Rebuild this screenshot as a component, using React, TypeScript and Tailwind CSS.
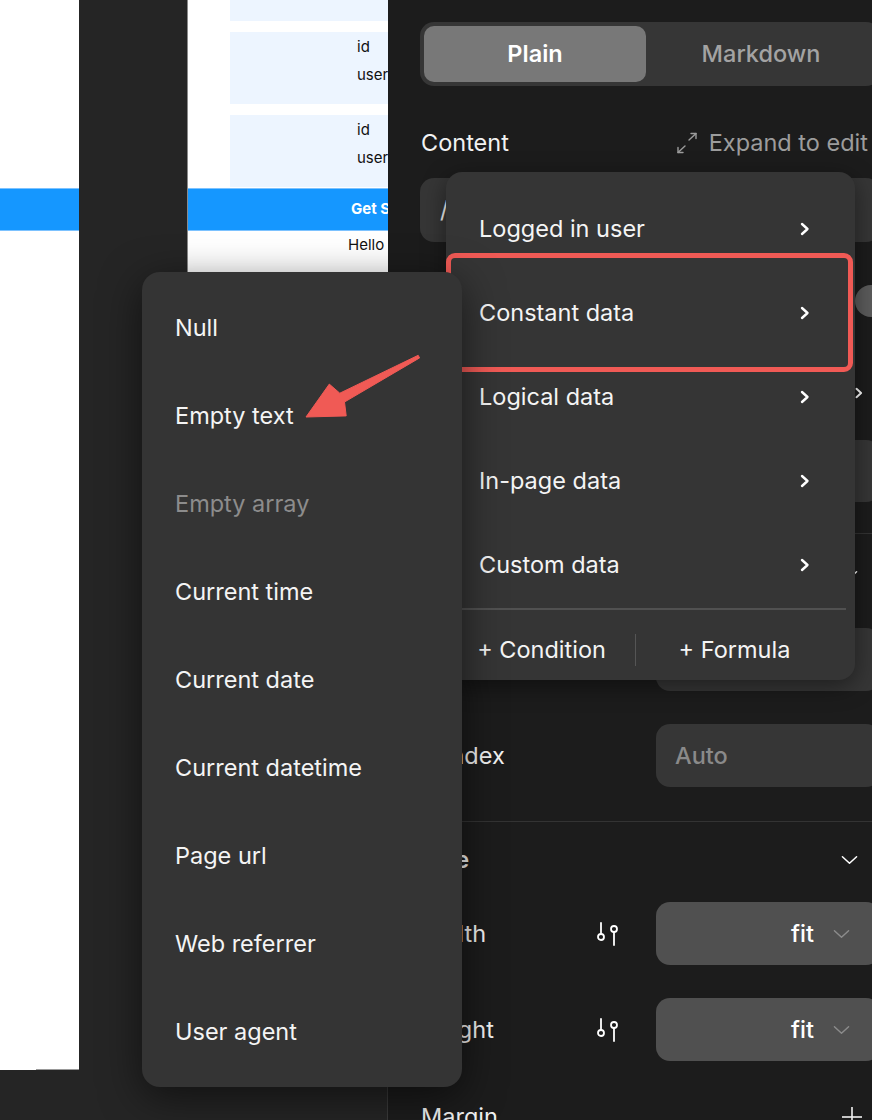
import React from 'react';

const mainItems = ['Logged in user', 'Constant data', 'Logical data', 'In-page data', 'Custom data'];

const constantItems = [
  { label: 'Null' },
  { label: 'Empty text' },
  { label: 'Empty array', muted: true },
  { label: 'Current time' },
  { label: 'Current date' },
  { label: 'Current datetime' },
  { label: 'Page url' },
  { label: 'Web referrer' },
  { label: 'User agent' },
];

function ChevronRight({ className = '' }: { className?: string }) {
  return (
    <svg viewBox="0 0 12 16" className={className} fill="none" stroke="currentColor" strokeWidth="2.4" strokeLinecap="round" strokeLinejoin="round">
      <polyline points="3,3 8.5,8 3,13" />
    </svg>
  );
}

function ChevronDown({ className = '', width = 1.6 }: { className?: string; width?: number }) {
  return (
    <svg viewBox="0 0 18 10" className={className} fill="none" stroke="currentColor" strokeWidth={width} strokeLinecap="round" strokeLinejoin="round">
      <polyline points="1.5,1.5 9,8.5 16.5,1.5" />
    </svg>
  );
}

function ExpandIcon() {
  return (
    <svg viewBox="0 0 24 22" className="h-[22px] w-[24px]" fill="none" stroke="currentColor" strokeWidth="1.4" strokeLinecap="round" strokeLinejoin="round">
      <line x1="14" y1="8" x2="21" y2="1.5" />
      <polyline points="16,1.5 21,1.5 21,6.5" />
      <line x1="10" y1="14" x2="3" y2="20.5" />
      <polyline points="3,15.5 3,20.5 8,20.5" />
    </svg>
  );
}

function SlidersIcon() {
  return (
    <svg viewBox="0 0 24 24" className="h-[24px] w-[24px]" fill="none" stroke="currentColor" strokeWidth="1.8" strokeLinecap="round">
      <line x1="5" y1="1" x2="5" y2="12" />
      <circle cx="5" cy="15" r="3" />
      <circle cx="18" cy="7" r="3" />
      <line x1="18" y1="10" x2="18" y2="23" />
    </svg>
  );
}

function FitSelect() {
  return (
    <div className="ml-auto flex h-[63px] w-[224px] items-center justify-end rounded-[14px] bg-[#505050] pr-[30px]">
      <span className="font-medium text-white">fit</span>
      <ChevronDown className="ml-[19px] h-[10px] w-[17px] text-[#8c8c8c]" width={1.5} />
    </div>
  );
}

export default function App() {
  return (
    <div className="relative flex h-[1120px] w-[872px] overflow-hidden bg-[#252525] font-['Inter',sans-serif]">
      {/* canvas */}
      <div className="relative h-full w-[388px] shrink-0 border-r border-[#3a3a3a]">
        <div className="absolute left-0 top-0 flex h-[1070px] w-[79px] flex-col bg-white">
          <div className="mt-[188px] h-[43px] border-y border-[#7cc2ff] bg-[#1597ff]" />
          <div className="mt-auto ml-[36px] h-px bg-[#999]" />
        </div>
        <div className="absolute left-[187px] top-0 flex h-[700px] w-[201px] flex-col overflow-hidden border-l border-[#8a8a8a] bg-white text-[15px] text-[#111]">
          <div className="ml-[42px] h-[21px] shrink-0 bg-[#edf5ff]" />
          <div className="ml-[42px] mt-[11px] flex h-[72px] shrink-0 flex-col bg-[#edf5ff] pl-[127px] pt-[1px] leading-[28px]">
            <span>id</span>
            <span>user</span>
          </div>
          <div className="ml-[42px] mt-[11px] flex h-[72px] shrink-0 flex-col bg-[#edf5ff] pl-[127px] pt-[1px] leading-[28px]">
            <span>id</span>
            <span>user</span>
          </div>
          <div className="mt-px flex h-[43px] shrink-0 items-center whitespace-nowrap border-y border-[#7cc2ff] bg-[#1597ff] pl-[163px] font-bold text-white">
            Get Started
          </div>
          <div className="whitespace-nowrap pl-[160px] pt-[2px] leading-[24px]">Hello</div>
        </div>
      </div>

      {/* properties panel */}
      <div className="h-full flex-1 bg-[#1c1c1c]">
        <div className="flex w-[492px] flex-col pl-[32px] pt-[22px] text-[23.5px] text-[#f2f2f2]">
          <div className="flex h-[64px] rounded-[14px] bg-[#363636] p-[4px]">
            <div className="flex w-[222px] items-center justify-center rounded-[10px] bg-[#787878] font-semibold text-white">Plain</div>
            <div className="flex flex-1 items-center justify-center font-medium text-[#a3a3a3]">Markdown</div>
          </div>

          <div className="mt-[39px] flex h-[36px] items-center justify-between pl-px pr-[12px]">
            <span>Content</span>
            <span className="flex items-center gap-[10px] text-[#9c9c9c]">
              <ExpandIcon />
              Expand to edit
            </span>
          </div>

          <div className="mt-[17px] flex h-[64px] items-center rounded-[14px] bg-[#363636] pl-[20px]">/</div>

          <div className="mt-[43px] flex h-[32px] justify-end">
            <div className="mr-[-20px] h-[32px] w-[45px] rounded-full bg-[#5c5c5c]" />
          </div>

          <div className="mt-[64px] flex h-[24px] items-center justify-end pr-[16px]">
            <ChevronRight className="h-[14px] w-[10px] text-white" />
          </div>

          <div className="mt-[35px] ml-auto h-[62px] w-[224px] rounded-[14px] bg-[#363636]" />

          <div className="mt-[31px] -ml-[33px] h-px w-[500px] bg-[#333]" />

          <div className="mt-[29px] flex h-[24px] items-center justify-end pr-[22px]">
            <ChevronDown className="h-[10px] w-[17px] text-white" />
          </div>

          <div className="mt-[41px] ml-auto h-[63px] w-[224px] rounded-[14px] bg-[#363636]" />

          <div className="mt-[33px] flex h-[63px] items-center pl-px">
            <span>z-index</span>
            <div className="ml-auto flex h-[63px] w-[224px] items-center rounded-[14px] bg-[#363636] pl-[19px] font-medium text-[#8a8a8a]">Auto</div>
          </div>

          <div className="mt-[34px] -ml-[33px] h-px w-[500px] bg-[#333]" />

          <div className="mt-[23px] flex h-[30px] items-center justify-between pl-px pr-[22px]">
            <span className="font-semibold">Size</span>
            <ChevronDown className="h-[10px] w-[17px] text-white" />
          </div>

          <div className="mt-[27px] flex h-[63px] items-center pl-px">
            <span className="w-[175px]">Width</span>
            <span className="text-white"><SlidersIcon /></span>
            <FitSelect />
          </div>

          <div className="mt-[33px] flex h-[63px] items-center pl-px">
            <span className="w-[175px]">Height</span>
            <span className="text-white"><SlidersIcon /></span>
            <FitSelect />
          </div>

          <div className="mt-[41px] flex h-[30px] items-center justify-between pl-px pr-[18px]">
            <span>Margin</span>
            <svg viewBox="0 0 20 20" className="h-[20px] w-[20px]" fill="none" stroke="currentColor" strokeWidth="1.6">
              <line x1="10" y1="0" x2="10" y2="20" />
              <line x1="0" y1="10" x2="20" y2="10" />
            </svg>
          </div>
        </div>
      </div>

      {/* data source dropdown */}
      <div className="absolute left-[446px] top-[172px] flex h-[508px] w-[409px] flex-col rounded-[16px] bg-[#353535] pt-[15px] text-[23.5px] text-[#f4f4f4] shadow-[0_6px_24px_rgba(0,0,0,0.45)]">
        {mainItems.map((item) => (
          <div key={item} className="flex h-[84px] items-center justify-between pl-[33px] pr-[44px]">
            <span>{item}</span>
            <ChevronRight className="h-[16px] w-[12px] text-white" />
          </div>
        ))}
        <div className="mx-[9px] mt-px h-[2px] bg-[#515151]" />
        <div className="flex flex-1 items-center pt-[10px]">
          <div className="flex w-[189px] justify-center pl-[2px]">+ Condition</div>
          <div className="h-[32px] w-px bg-[#555]" />
          <div className="flex flex-1 justify-center pr-[22px]">+ Formula</div>
        </div>
      </div>

      {/* highlight */}
      <div className="absolute left-[446px] top-[253px] h-[119px] w-[407px] rounded-[9px] border-[5px] border-[#f05a55]" />

      {/* constant data submenu */}
      <div className="absolute left-[142px] top-[272px] flex h-[815px] w-[320px] flex-col rounded-[18px] bg-[#343434] pt-[12px] text-[23.5px] text-[#f4f4f4] shadow-[0_10px_40px_rgba(0,0,0,0.55)]">
        {constantItems.map((item) => (
          <div key={item.label} className={`flex h-[88px] items-center pl-[33px] ${item.muted ? 'text-[#8c8c8c]' : ''}`}>
            {item.label}
          </div>
        ))}
      </div>

      {/* annotation arrow */}
      <svg className="pointer-events-none absolute left-0 top-0" width="872" height="1120" viewBox="0 0 872 1120">
        <polygon
          points="418.2,355.3 339.8,393.2 329.3,384.1 306,417 346.2,415.9 344.5,402 419.6,357.9"
          fill="#f05a55"
          stroke="#f05a55"
          strokeWidth="1"
          strokeLinejoin="round"
        />
      </svg>
    </div>
  );
}
